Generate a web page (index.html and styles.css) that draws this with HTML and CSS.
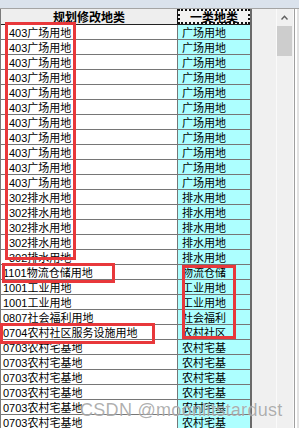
FILE: index.html
```html
<!DOCTYPE html>
<html lang="zh-CN">
<head>
<meta charset="utf-8">
<link rel="stylesheet" href="styles.css">
</head>
<body>
<div class="window">
  <div class="topbar"></div>
  <div class="main">
    <div class="sheet">
      <div class="row head"><div class="c1">规划修改地类</div><div class="c2 sel">一类地类</div></div>
      <div class="row"><div class="c1 ind">403广场用地</div><div class="c2">广场用地</div></div>
      <div class="row"><div class="c1 ind">403广场用地</div><div class="c2">广场用地</div></div>
      <div class="row"><div class="c1 ind">403广场用地</div><div class="c2">广场用地</div></div>
      <div class="row"><div class="c1 ind">403广场用地</div><div class="c2">广场用地</div></div>
      <div class="row"><div class="c1 ind">403广场用地</div><div class="c2">广场用地</div></div>
      <div class="row"><div class="c1 ind">403广场用地</div><div class="c2">广场用地</div></div>
      <div class="row"><div class="c1 ind">403广场用地</div><div class="c2">广场用地</div></div>
      <div class="row"><div class="c1 ind">403广场用地</div><div class="c2">广场用地</div></div>
      <div class="row"><div class="c1 ind">403广场用地</div><div class="c2">广场用地</div></div>
      <div class="row"><div class="c1 ind">403广场用地</div><div class="c2">广场用地</div></div>
      <div class="row"><div class="c1 ind">403广场用地</div><div class="c2">广场用地</div></div>
      <div class="row"><div class="c1 ind">302排水用地</div><div class="c2">排水用地</div></div>
      <div class="row"><div class="c1 ind">302排水用地</div><div class="c2">排水用地</div></div>
      <div class="row"><div class="c1 ind">302排水用地</div><div class="c2">排水用地</div></div>
      <div class="row"><div class="c1 ind">302排水用地</div><div class="c2">排水用地</div></div>
      <div class="row"><div class="c1 ind">302排水用地</div><div class="c2">排水用地</div></div>
      <div class="row"><div class="c1">1101物流仓储用地</div><div class="c2">物流仓储</div></div>
      <div class="row"><div class="c1">1001工业用地</div><div class="c2">工业用地</div></div>
      <div class="row"><div class="c1">1001工业用地</div><div class="c2">工业用地</div></div>
      <div class="row"><div class="c1">0807社会福利用地</div><div class="c2">社会福利</div></div>
      <div class="row"><div class="c1">0704农村社区服务设施用地</div><div class="c2">农村社区</div></div>
      <div class="row"><div class="c1">0703农村宅基地</div><div class="c2">农村宅基</div></div>
      <div class="row"><div class="c1">0703农村宅基地</div><div class="c2">农村宅基</div></div>
      <div class="row"><div class="c1">0703农村宅基地</div><div class="c2">农村宅基</div></div>
      <div class="row"><div class="c1">0703农村宅基地</div><div class="c2">农村宅基</div></div>
      <div class="row"><div class="c1">0703农村宅基地</div><div class="c2">农村宅基</div></div>
      <div class="row"><div class="c1">0703农村宅基地</div><div class="c2">农村宅基</div></div>
    </div>
    <div class="side">
      <div class="gap"></div>
      <div class="vscroll">
        <div class="arrow">
          <svg width="7" height="5" viewBox="0 0 7 5"><polyline points="0.5,4.5 3.5,1.2 6.5,4.5" fill="none" stroke="#5f5f5f" stroke-width="1.4"/></svg>
        </div>
        <div class="thumb"></div>
      </div>
      <div class="edge"></div>
    </div>
  </div>
  <div class="mark m1"></div>
  <div class="mark m2"></div>
  <div class="mark m3"></div>
  <div class="mark m4"></div>
  <div class="wm">CSDN @moonlitstardust</div>
</div>
</body>
</html>
```
FILE: styles.css
```css
html, body {
  margin: 0;
  padding: 0;
}
body {
  background: #f0f0f0;
  font-family: "Liberation Sans", "Noto Sans CJK SC", sans-serif;
  color: #000;
}
.window {
  position: relative;
  width: 299px;
  height: 428px;
  overflow: hidden;
}
.topbar {
  height: 8px;
  background: #dae2ec;
  border-bottom: 1px solid #a4a4a4;
}
.main {
  display: flex;
  height: 419px;
}
.sheet {
  flex: 0 0 252px;
  box-sizing: border-box;
  border-left: 1px solid #7a7a7a;
  border-right: 2px solid #6a6a6a;
  background: #fff;
}
.row {
  display: flex;
  height: 14px;
  border-bottom: 1px solid #767676;
  font-size: 11px;
  line-height: 12px;
}
.c1 {
  flex: 0 0 177px;
  box-sizing: border-box;
  border-right: 1px solid #767676;
  padding: 2px 0 0 2px;
  white-space: nowrap;
  overflow: hidden;
}
.c1.ind {
  padding-left: 8px;
}
.c2 {
  flex: 0 0 72px;
  box-sizing: border-box;
  background: #adffff;
  padding: 2px 0 0 4px;
  white-space: nowrap;
  overflow: hidden;
}
.head {
  height: 15px;
  background: #eeeeee;
  border-bottom: 1px solid #222;
  font-family: "Noto Sans CJK SC", sans-serif;
  font-weight: bold;
  font-size: 12px;
  line-height: 15px;
}
.head .c1 {
  border-right: 1px solid #111;
  text-align: center;
  padding: 0;
  overflow: visible;
  background: #eeeeee;
}
.head .c2 {
  background: #f2f2f2;
  border: 2px dotted #111;
  text-align: center;
  padding: 0;
  overflow: visible;
  line-height: 11px;
}
.side {
  flex: 1;
  display: flex;
  background: #f0f0f0;
}
.gap {
  flex: 0 0 24px;
}
.vscroll {
  flex: 0 0 16px;
  border-left: 1px solid #fafafa;
  border-right: 1px solid #fafafa;
  background: #f0f0f0;
}
.arrow {
  height: 17px;
  display: flex;
  align-items: center;
  justify-content: center;
  padding-right: 1px;
}
.arrow svg {
  display: block;
}
.thumb {
  width: 15px;
  height: 30px;
  background: #cdcdcd;
}
.edge {
  flex: 1;
  border-left: 1px solid #a0a0a0;
  box-shadow: inset 2px 0 0 #ffffff;
  background: #e2e2e2;
}
.mark {
  position: absolute;
  box-sizing: border-box;
  border: 3px solid #e8383b;
}
.m1 { left: 5px; top: 22px; width: 71px; height: 238px; }
.m2 { left: 2px; top: 263px; width: 113px; height: 20px; }
.m3 { left: 182px; top: 265px; width: 54px; height: 74px; }
.m4 { left: 0; top: 323px; width: 155px; height: 21px; }
.wm {
  position: absolute;
  left: 80px;
  top: 400px;
  font-family: "Liberation Sans", sans-serif;
  font-size: 18px;
  line-height: 20px;
  letter-spacing: 0.3px;
  color: rgba(95, 95, 95, 0.5);
  text-shadow: 0 0 1px rgba(255, 255, 255, 0.9);
  white-space: nowrap;
}
```
